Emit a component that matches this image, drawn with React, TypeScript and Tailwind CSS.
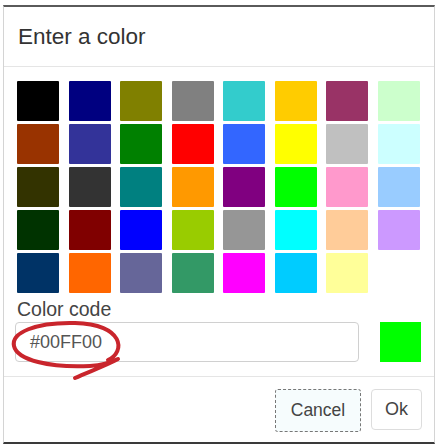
import React from "react";

const colors = [
  "#000000", "#000080", "#808000", "#808080", "#33CCCC", "#FFCC00", "#993366", "#CCFFCC",
  "#993300", "#333399", "#008000", "#FF0000", "#3366FF", "#FFFF00", "#C0C0C0", "#CCFFFF",
  "#333300", "#333333", "#008080", "#FF9900", "#800080", "#00FF00", "#FF99CC", "#99CCFF",
  "#003300", "#800000", "#0000FF", "#99CC00", "#969696", "#00FFFF", "#FFCC99", "#CC99FF",
  "#003366", "#FF6600", "#666699", "#339966", "#FF00FF", "#00CCFF", "#FFFF99", "",
];

export default function App() {
  return (
    <div className="relative w-[437px] h-[446px] bg-white" style={{ fontFamily: '"Liberation Sans", Arial, sans-serif' }}>
      <div className="absolute left-[3px] top-[5px] w-[432px] h-[439px] flex flex-col border-x border-[#d4d4d4] border-t-2 border-t-[#5a5a5a] border-b-2 border-b-[#3a3a3a] bg-white">
        <div className="h-[60px] flex items-center px-[14px] border-b border-[#e5e5e5]">
          <span className="text-[22.5px] text-[#333]">Enter a color</span>
        </div>
        <div className="px-[13px] pt-[14px]">
          <div className="grid grid-cols-[repeat(8,42px)] gap-x-[9.5px] gap-y-[3px]">
            {colors.map((c, i) => (
              <div key={i} className="h-[40px] rounded-[1px]" style={{ backgroundColor: c || "transparent" }} />
            ))}
          </div>
          <div className="mt-[4px] text-[19.5px] leading-[24px] text-[#444]">Color code</div>
          <div className="mt-[1px] flex items-center">
            <div className="ml-[-2px] w-[345px] h-[40px] border border-[#d0d0d0] rounded-[4px] flex items-center pl-[14px] text-[18px] text-[#555]">
              #00FF00
            </div>
            <div className="ml-[21px] w-[41px] h-[40px] bg-[#00FF00]" />
          </div>
        </div>
        <div className="mt-[14px] border-t border-[#e5e5e5] flex justify-end items-start gap-[10px] pr-[12px] pt-[12px]">
          <div className="w-[86px] h-[43px] border border-dashed border-[#777] rounded-[3px] bg-[#f6fcfd] flex items-center justify-center text-[17.5px] text-[#444]">
            Cancel
          </div>
          <div className="w-[51px] h-[41px] border border-[#ddd] rounded-[4px] flex items-center justify-center text-[18px] text-[#444]">
            Ok
          </div>
        </div>
      </div>
      <svg className="absolute left-0 top-0 pointer-events-none" width="437" height="446" viewBox="0 0 437 446">
        <path
          d="M 108 360 C 126 352, 124 324, 75 323 C 35 322, 11 333, 14 346 C 17 360, 50 368, 90 366 C 104 365, 112 362, 118 359 C 105 366, 88 372, 75 378"
          fill="none"
          stroke="#c9252c"
          strokeWidth="4"
          strokeLinecap="round"
          strokeLinejoin="round"
        />
      </svg>
    </div>
  );
}
